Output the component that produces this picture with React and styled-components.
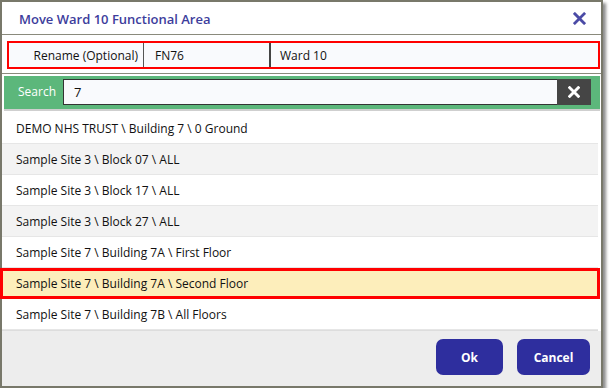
import React, { useState } from "react";
import styled, { createGlobalStyle } from "styled-components";

const GlobalStyle = createGlobalStyle`
  body {
    margin: 0;
    background: #ffffff;
    font-family: "Open Sans", "Liberation Sans", sans-serif;
  }
  * {
    box-sizing: border-box;
  }
`;

const locations = [
  "DEMO NHS TRUST \\ Building 7 \\ 0 Ground",
  "Sample Site 3 \\ Block 07 \\ ALL",
  "Sample Site 3 \\ Block 17 \\ ALL",
  "Sample Site 3 \\ Block 27 \\ ALL",
  "Sample Site 7 \\ Building 7A \\ First Floor",
  "Sample Site 7 \\ Building 7A \\ Second Floor",
  "Sample Site 7 \\ Building 7B \\ All Floors",
];

const CrossIcon = ({ size = 14, color = "currentColor", weight = 3.2 }) => (
  <svg width={size} height={size} viewBox="0 0 14 14">
    <path d="M2 2 L12 12 M12 2 L2 12" stroke={color} strokeWidth={weight} strokeLinecap="square" />
  </svg>
);

export default function App() {
  const [query, setQuery] = useState("7");
  const [selected, setSelected] = useState(5);

  return (
    <>
      <GlobalStyle />
      <Window>
        <TitleBar>
          <Title>Move Ward 10 Functional Area</Title>
          <CloseButton>
            <CrossIcon size={13} color="#4b4ba6" weight={3} />
          </CloseButton>
        </TitleBar>
        <RenameSection>
          <RenameBox>
            <RenameLabel>Rename (Optional)</RenameLabel>
            <RenameCell $width="125px">FN76</RenameCell>
            <RenameCell $dark>Ward 10</RenameCell>
          </RenameBox>
        </RenameSection>
        <SearchBar>
          <SearchLabel>Search</SearchLabel>
          <SearchInput value={query} onChange={(e) => setQuery(e.target.value)} />
          <ClearButton onClick={() => setQuery("")}>
            <CrossIcon size={12} color="#ffffff" weight={3.4} />
          </ClearButton>
        </SearchBar>
        <List>
          {locations.map((loc, i) => (
            <Row key={loc} $striped={i % 2 === 1} $active={i === selected} onClick={() => setSelected(i)}>
              {loc}
            </Row>
          ))}
        </List>
        <Footer>
          <ActionButton $width="67px">Ok</ActionButton>
          <ActionButton $width="73px">Cancel</ActionButton>
        </Footer>
      </Window>
    </>
  );
}

const Window = styled.div`
  width: 603px;
  height: 388px;
  border: 2px solid #78786a;
  box-shadow: 3px 3px 3px rgba(0, 0, 0, 0.45);
  background: #ffffff;
  display: flex;
  flex-direction: column;
`;

const TitleBar = styled.div`
  height: 33px;
  display: flex;
  align-items: center;
  justify-content: space-between;
  padding: 1px 15px 0 17px;
  border-bottom: 1px solid #8a8a7c;
`;

const Title = styled.div`
  color: #3d3d9c;
  font-size: 13px;
  font-weight: 600;
`;

const CloseButton = styled.div`
  display: flex;
  align-items: center;
  cursor: pointer;
`;

const RenameSection = styled.div`
  padding: 6px 1px 4px 5px;
  border-bottom: 1px solid #8a8a7c;
`;

const RenameBox = styled.div`
  height: 28px;
  border: 2px solid #ff0000;
  background: #f9fafd;
  display: flex;
  align-items: stretch;
  font-size: 12px;
  color: #111111;
`;

const RenameLabel = styled.div`
  width: 135px;
  display: flex;
  align-items: center;
  justify-content: flex-end;
  padding-right: 5px;
  border-right: 1px solid #555555;
`;

const RenameCell = styled.div`
  ${({ $width }) => ($width ? `width: ${$width};` : "flex: 1;")}
  display: flex;
  align-items: center;
  padding-left: ${({ $dark }) => ($dark ? "9px" : "11px")};
  border-left: ${({ $dark }) => ($dark ? "2px solid #444444" : "none")};
`;

const SearchBar = styled.div`
  margin: 2px 1px 0 2px;
  height: 35px;
  background: #5cb77b;
  display: flex;
  align-items: center;
  padding: 0 9px 2px 0;
  border-bottom: 2px solid #cfcfcf;
`;

const SearchLabel = styled.div`
  color: #ffffff;
  font-size: 12px;
  width: 59px;
  padding-left: 14px;
`;

const SearchInput = styled.input`
  flex: 1;
  height: 26px;
  border: 1px solid #333333;
  border-right: none;
  background: #f9fafd;
  font-family: inherit;
  font-size: 13px;
  padding: 0 10px;
  outline: none;
  color: #111111;
`;

const ClearButton = styled.div`
  width: 34px;
  height: 26px;
  background: #454545;
  display: flex;
  align-items: center;
  justify-content: center;
  cursor: pointer;
`;

const List = styled.div`
  flex: 1;
  display: flex;
  flex-direction: column;
  margin-top: 2px;
  margin-right: 3px;
  border-bottom: 1px solid #dddddd;
`;

const Row = styled.div`
  height: 31px;
  display: flex;
  align-items: center;
  padding-left: 14px;
  font-size: 12px;
  color: #111111;
  cursor: pointer;
  border-bottom: 1px solid #e6e6e6;
  background: ${({ $striped }) => ($striped ? "#f3f3f3" : "#ffffff")};
  ${({ $active }) =>
    $active &&
    `
    background: #fdeebb;
    border: 3px solid #ff0000;
    margin-left: -2px;
    margin-right: -2px;
    padding-left: 13px;
  `}
`;

const Footer = styled.div`
  height: 55px;
  background: #ededed;
  display: flex;
  justify-content: flex-end;
  align-items: flex-start;
  gap: 14px;
  padding: 8px 11px 0 0;
`;

const ActionButton = styled.button`
  width: ${({ $width }) => $width};
  height: 36px;
  border: none;
  border-radius: 7px;
  background: #2e2e9e;
  color: #ffffff;
  font-family: inherit;
  font-size: 12px;
  font-weight: 700;
  cursor: pointer;
`;
